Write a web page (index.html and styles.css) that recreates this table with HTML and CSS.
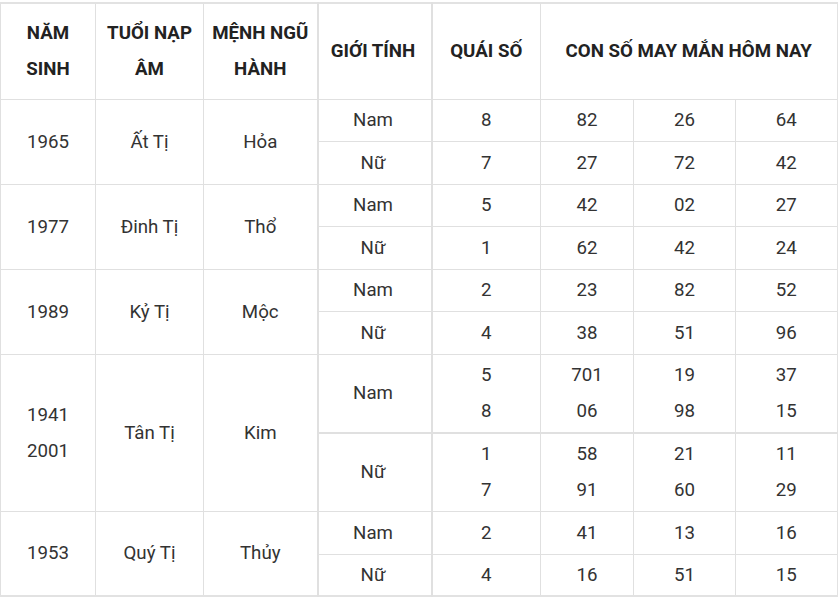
FILE: index.html
```html
<!DOCTYPE html>
<html lang="vi">
<head>
<meta charset="utf-8">
<title>Con số may mắn</title>
<link rel="stylesheet" href="styles.css">
</head>
<body>
<table class="lucky">
  <colgroup>
    <col class="c-year">
    <col class="c-age">
    <col class="c-elem">
    <col class="c-sex">
    <col class="c-quai">
    <col class="c-n1">
    <col class="c-n2">
    <col class="c-n3">
  </colgroup>
  <thead>
    <tr class="head">
      <th>NĂM SINH</th>
      <th>TUỔI NẠP ÂM</th>
      <th>MỆNH NGŨ HÀNH</th>
      <th class="sex">GIỚI TÍNH</th>
      <th>QUÁI SỐ</th>
      <th colspan="3">CON SỐ MAY MẮN HÔM NAY</th>
    </tr>
  </thead>
  <tbody>
    <tr class="r42">
      <td rowspan="2">1965</td>
      <td rowspan="2">Ất Tị</td>
      <td rowspan="2">Hỏa</td>
      <td class="sex">Nam</td>
      <td>8</td><td>82</td><td>26</td><td>64</td>
    </tr>
    <tr class="r43">
      <td class="sex">Nữ</td>
      <td>7</td><td>27</td><td>72</td><td>42</td>
    </tr>
    <tr class="r42">
      <td rowspan="2">1977</td>
      <td rowspan="2">Đinh Tị</td>
      <td rowspan="2">Thổ</td>
      <td class="sex">Nam</td>
      <td>5</td><td>42</td><td>02</td><td>27</td>
    </tr>
    <tr class="r43">
      <td class="sex">Nữ</td>
      <td>1</td><td>62</td><td>42</td><td>24</td>
    </tr>
    <tr class="r42">
      <td rowspan="2">1989</td>
      <td rowspan="2">Kỷ Tị</td>
      <td rowspan="2">Mộc</td>
      <td class="sex">Nam</td>
      <td>2</td><td>23</td><td>82</td><td>52</td>
    </tr>
    <tr class="r43">
      <td class="sex">Nữ</td>
      <td>4</td><td>38</td><td>51</td><td>96</td>
    </tr>
    <tr class="r79 split">
      <td rowspan="2">1941<br>2001</td>
      <td rowspan="2">Tân Tị</td>
      <td rowspan="2">Kim</td>
      <td class="sex">Nam</td>
      <td>5<br>8</td><td>701<br>06</td><td>19<br>98</td><td>37<br>15</td>
    </tr>
    <tr class="r78">
      <td class="sex">Nữ</td>
      <td>1<br>7</td><td>58<br>91</td><td>21<br>60</td><td>11<br>29</td>
    </tr>
    <tr class="r43">
      <td rowspan="2">1953</td>
      <td rowspan="2">Quý Tị</td>
      <td rowspan="2">Thủy</td>
      <td class="sex">Nam</td>
      <td>2</td><td>41</td><td>13</td><td>16</td>
    </tr>
    <tr class="r42">
      <td class="sex">Nữ</td>
      <td>4</td><td>16</td><td>51</td><td>15</td>
    </tr>
  </tbody>
</table>
</body>
</html>
```
FILE: styles.css
```css
html, body {
  margin: 0;
  padding: 0;
  background: #fff;
}
body {
  padding-top: 2px;
  font-family: Roboto, "Liberation Sans", Arial, sans-serif;
  color: #333;
}
.lucky {
  border-collapse: collapse;
  table-layout: fixed;
  width: 837px;
  border: 2px solid #e2e2e2;
  border-left-width: 1px;
}
.c-year { width: 95px; }
.c-age { width: 108px; }
.c-elem { width: 114px; }
.c-sex { width: 114px; }
.c-quai { width: 109px; }
.c-n1 { width: 93px; }
.c-n2 { width: 102px; }
.c-n3 { width: 102px; }

.lucky th,
.lucky td {
  border: 1px solid #e0e0e0;
  text-align: center;
  vertical-align: middle;
  padding: 0 5px;
  font-size: 18.7px;
  line-height: 36px;
}
.lucky th {
  font-weight: 700;
  color: #222;
}
.lucky td {
  font-weight: 400;
  color: #333;
}
.lucky .sex {
  border-left: 2px solid #e0e0e0;
  border-right: 2px solid #e0e0e0;
  padding-right: 8px;
}
.head { height: 96px; }
.r42 { height: 42px; }
.r43 { height: 43px; }
.r79 { height: 79px; }
.r78 { height: 78px; }
.split td {
  border-bottom: 2px solid #e0e0e0;
}
.split td[rowspan] {
  border-bottom: 1px solid #e0e0e0;
}
```
